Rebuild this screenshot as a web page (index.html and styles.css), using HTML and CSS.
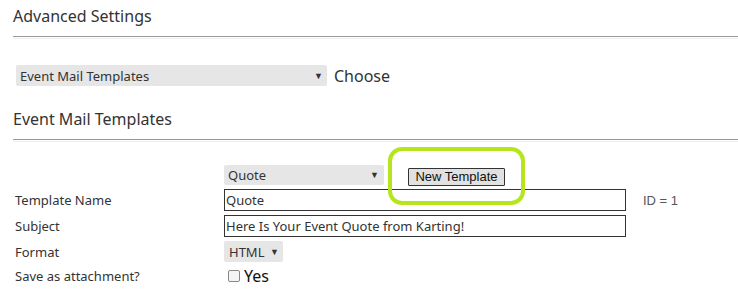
FILE: index.html
```html
<!DOCTYPE html>
<html>
<head>
<meta charset="utf-8">
<link rel="stylesheet" href="styles.css">
</head>
<body>
<div class="page">
  <h2 class="heading">Advanced Settings</h2>
  <div class="rule"></div>
  <div class="chooser">
    <div class="select select-wide"><span class="select-text">Event Mail Templates</span><span class="arrow">▼</span></div>
    <span class="choose">Choose</span>
  </div>
  <h2 class="heading heading-second">Event Mail Templates</h2>
  <div class="rule"></div>
  <div class="form">
    <div class="label"></div>
    <div class="control control-top">
      <div class="select select-quote"><span class="select-text">Quote</span><span class="arrow">▼</span></div>
      <div class="btn-wrap">
        <button class="btn">New Template</button>
        <span class="highlight"></span>
      </div>
    </div>
    <div class="label">Template Name</div>
    <div class="control"><div class="input">Quote</div><span class="id">ID = 1</span></div>
    <div class="label">Subject</div>
    <div class="control"><div class="input">Here Is Your Event Quote from Karting!</div></div>
    <div class="label">Format</div>
    <div class="control"><div class="select select-format"><span class="select-text">HTML</span><span class="arrow">▼</span></div></div>
    <div class="label">Save as attachment?</div>
    <div class="control control-check"><span class="checkbox"></span><span class="yes">Yes</span></div>
    <div class="label">Footer</div>
    <div class="control"></div>
  </div>
</div>
</body>
</html>
```

FILE: styles.css
```css
* { box-sizing: border-box; }
html, body { margin: 0; padding: 0; background: #fff; }
body { font-family: "Noto Sans", "Open Sans", sans-serif; color: #333; overflow: hidden; }
.page { padding: 5px 0 0 13px; width: 738px; height: 293px; overflow: hidden; }
.heading { margin: 0; font-weight: normal; font-size: 16px; line-height: 22px; color: #333; }
.rule { margin-top: 9px; height: 3px; border-top: 1px solid #999; border-bottom: 1px solid #eee; }
.chooser { display: flex; align-items: center; margin-top: 26px; padding-left: 3px; height: 21px; margin-bottom: 22px; }
.select { display: flex; align-items: center; justify-content: space-between; background: #e6e6e6; border-radius: 2px; font-size: 13px; color: #333; }
.select-wide { width: 311px; height: 21px; padding: 0 4px 0 4px; font-size: 13px; }
.arrow { font-size: 9px; color: #333; }
.choose { margin-left: 7px; font-size: 16px; color: #333; }
.form { display: grid; grid-template-columns: 211px 1fr; row-gap: 4px; margin-top: 22px; }
.label { font-size: 13px; display: flex; align-items: center; padding-left: 2px; color: #333; }
.control { display: flex; align-items: center; }
.control-top { height: 21px; }
.select-quote { width: 160px; height: 20px; padding: 0 5px 0 4px; }
.btn-wrap { position: relative; margin-left: 24px; }
.btn { font-family: "Liberation Sans", Arial, sans-serif; font-size: 13px; height: 18px; width: 97px; padding: 0; background: #e1e1e1; border: 1px solid #333; color: #111; border-radius: 1px; line-height: 16px; }
.highlight { position: absolute; left: -20px; right: -20px; top: -17px; bottom: -19px; border: 4px solid #b5e61d; border-radius: 14px; }
.input { width: 402px; height: 22px; border: 1px solid #333; font-size: 13px; padding: 0 1px; line-height: 20px; color: #333; }
.id { margin-left: 17px; font-family: "Liberation Sans", Arial, sans-serif; font-size: 13px; color: #555; }
.select-format { width: 59px; height: 21px; padding: 0 4px 0 5px; }
.control-check { height: 20px; }
.checkbox { display: inline-block; width: 12px; height: 12px; border: 1px solid #888; border-radius: 2px; background: #f4f4f4; margin-left: 4px; }
.yes { margin-left: 4px; font-size: 16px; color: #111; }
```
